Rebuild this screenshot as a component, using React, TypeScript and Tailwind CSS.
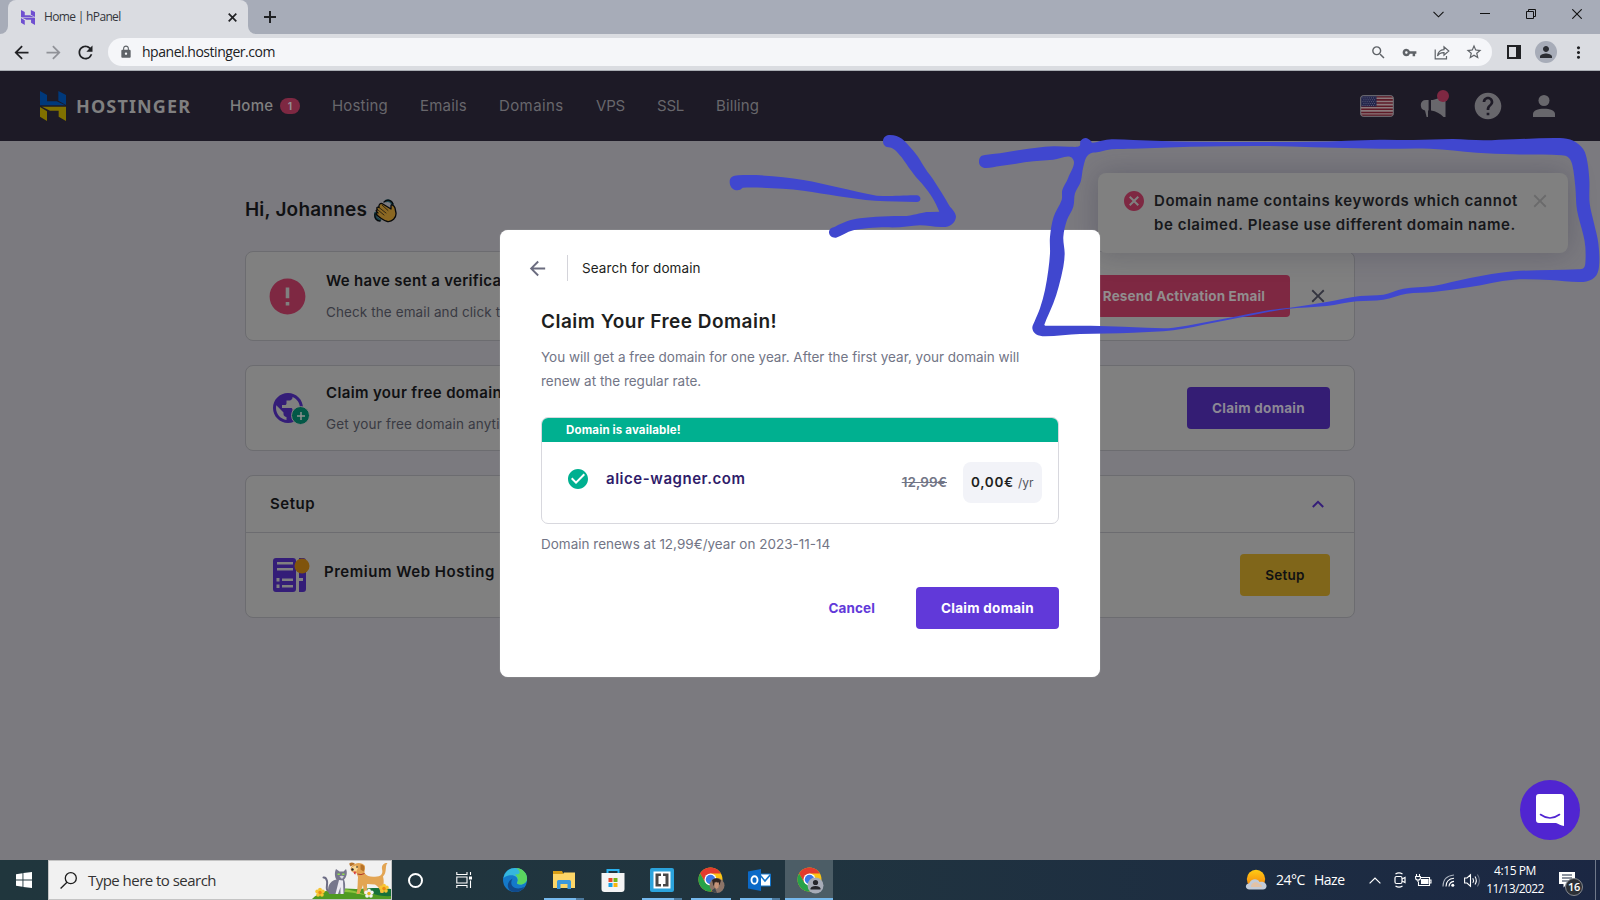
import type { ReactNode } from "react";
import {
  MdArrowBack,
  MdArrowForward,
  MdCancel,
  MdCheckCircle,
  MdClose,
  MdError,
  MdHelp,
  MdLock,
  MdMoreVert,
  MdPerson,
  MdPublic,
  MdRefresh,
  MdSearch,
  MdStarBorder,
  MdVpnKey,
} from "react-icons/md";

type Point = [number, number];

/** Closed smooth outline through the given points. */
function smooth(points: Point[]): string {
  const n = points.length;
  const at = (i: number) => points[(i + n) % n];
  let d = `M${points[0][0]} ${points[0][1]}`;
  for (let i = 0; i < n; i++) {
    const [p0, p1, p2, p3] = [at(i - 1), at(i), at(i + 1), at(i + 2)];
    const reach = Math.hypot(p2[0] - p1[0], p2[1] - p1[1]) / 3;
    const inLen = Math.hypot(p2[0] - p0[0], p2[1] - p0[1]) || 1;
    const outLen = Math.hypot(p3[0] - p1[0], p3[1] - p1[1]) || 1;
    const ax = p1[0] + ((p2[0] - p0[0]) / inLen) * reach;
    const ay = p1[1] + ((p2[1] - p0[1]) / inLen) * reach;
    const bx = p2[0] - ((p3[0] - p1[0]) / outLen) * reach;
    const by = p2[1] - ((p3[1] - p1[1]) / outLen) * reach;
    d += `C${ax} ${ay} ${bx} ${by} ${p2[0]} ${p2[1]}`;
  }
  return d + "Z";
}

const boxOuter: Point[] = [
  [855, 105], [900, 100], [960, 90], [1010, 83], [1060, 79], [1110, 80], [1138, 78], [1142, 62], [1157, 54], [1172, 62], [1177, 68],
  [1205, 62], [1235, 58], [1300, 60], [1470, 65], [1840, 65], [2040, 59], [2140, 60], [2260, 57], [2350, 61], [2440, 58], [2580, 54],
  [2620, 62], [2650, 88], [2662, 125], [2668, 180], [2669, 250], [2682, 310], [2695, 370], [2697, 440], [2684, 472], [2650, 486],
  [2550, 480], [2440, 479], [2310, 501], [2200, 516], [2120, 521], [2050, 539], [1970, 544], [1880, 558], [1760, 567], [1640, 589],
  [1540, 608], [1420, 631], [1300, 638], [1140, 642], [1035, 649], [1008, 643], [997, 625], [1004, 604], [1020, 565], [1035, 510],
  [1045, 450], [1050, 400], [1050, 350], [1061, 290], [1085, 240], [1087, 210], [1104, 175], [1118, 116], [1060, 119], [1000, 124],
  [900, 138], [858, 144], [841, 137], [837, 122], [843, 109],
];

const boxInner: Point[] = [
  [1165, 104], [1200, 95], [1235, 88], [1300, 86], [1470, 80], [1700, 78], [1840, 82], [2040, 86], [2190, 86], [2330, 98], [2440, 103],
  [2585, 106], [2606, 113], [2617, 135], [2626, 200], [2631, 270], [2650, 345], [2656, 380], [2656, 430], [2651, 444], [2636, 448],
  [2440, 454], [2310, 474], [2200, 498], [2110, 506], [2050, 524], [1980, 528], [1880, 546], [1770, 563], [1710, 570], [1580, 595],
  [1420, 623], [1340, 623], [1200, 618], [1036, 617], [1033, 614], [1060, 550], [1076, 500], [1090, 440], [1094, 400], [1090, 350], [1101, 300],
  [1120, 260], [1125, 220], [1142, 185], [1150, 140],
];

function Scribble() {
  return (
    <svg className="pointer-events-none absolute inset-0 z-30" width="1600" height="900" viewBox="0 0 1600 900" fill="#4047cf">
      <g transform="translate(700 120) scale(.33333)">
        <path d="M89 186C89 172 98 167 115 166C180 163 250 170 310 180C380 192 450 212 530 227C570 230 620 226 650 226C665 227 665 245 650 246C610 244 570 245 525 242C450 236 380 222 310 212C250 205 190 202 128 203C120 212 108 213 98 206Q89 199 89 186Z" />
        <path d="M549 64C549 50 560 45 570 45C600 45 612 60 640 92C660 115 670 140 690 165C715 200 735 235 750 260C765 275 768 285 768 290C766 310 750 322 725 321C700 321 680 316 660 316C630 318 600 324 560 322C520 322 490 325 460 331C440 336 425 348 408 353C395 354 387 346 387 337C387 326 395 323 405 320C430 308 450 298 480 295C520 289 570 288 620 288C650 284 670 275 690 276L718 275C705 245 695 225 665 190C640 165 625 140 605 112C590 95 580 82 565 82C555 81 549 74 549 64Z" />
        <path fillRule="evenodd" d={smooth(boxOuter) + smooth(boxInner)} />
      </g>
    </svg>
  );
}

function HMark({ top, bottom, width, height }: { top: string; bottom: string; width: number; height: number }) {
  return (
    <svg width={width} height={height} viewBox="0 0 78 90" preserveAspectRatio="none">
      <path fill={top} d="M0 0L21 12V31H50L76 43H0ZM55 0L78 12V42L55 29Z" />
      <path fill={bottom} d="M0 48L21 61V90L0 77ZM6 47H78V90L56 77V59H30Z" />
    </svg>
  );
}

function BrowserChrome() {
  return (
    <div className="flex h-[71px] flex-col font-['Open_Sans',sans-serif]">
      <div className="flex h-[34px] bg-[#a7acb8]">
        <div className="flex w-2 items-end bg-[#dadce1]">
          <div className="h-full w-2 rounded-br-lg bg-[#a7acb8]" />
        </div>
        <div className="flex w-[240px] items-center rounded-t-lg bg-[#dadce1] pl-[13px] pr-[9px]">
          <HMark top="#6f4fd0" bottom="#6f4fd0" width={14} height={15} />
          <span className="ml-[9px] flex-1 text-[12px] tracking-[-0.66px] text-[#33363b]">Home | hPanel</span>
          <svg className="mr-[2px]" width="9" height="9" viewBox="0 0 9 9" stroke="#202124" strokeWidth="1.7"><path d="M.7 .7L8.300 8.300M8.300 .7L.7 8.300" /></svg>
        </div>
        <div className="flex w-2 bg-[#dadce1]">
          <div className="h-full w-2 rounded-bl-lg bg-[#a7acb8]" />
        </div>
        <div className="flex flex-1 items-center justify-between pl-[8px]">
          <svg width="12" height="12" viewBox="0 0 12 12" stroke="#202124" strokeWidth="2">
            <path d="M6 0V12M0 6H12" />
          </svg>
          <div className="flex items-center pb-[6px] pr-[18px]">
            <svg className="mr-[36px]" width="11" height="7" viewBox="0 0 11 7" fill="none" stroke="#111" strokeWidth="1.1"><path d="M.5 .8L5.5 5.8L10.5 .8" /></svg>
            <svg className="mr-[36px]" width="10" height="2" viewBox="0 0 10 2"><path d="M0 0H10V1H0Z" fill="#111" /></svg>
            <svg className="mr-[36px]" width="10" height="10" viewBox="0 0 10 10" fill="none" stroke="#111"><path d="M.5 2.5H7.5V9.5H.5ZM2.5 2.5V.5H9.5V7.5H7.5" /></svg>
            <svg width="10" height="10" viewBox="0 0 10 10" stroke="#111" strokeWidth="1.1"><path d="M.3 .3L9.7 9.7M9.7 .3L.3 9.7" /></svg>
          </div>
        </div>
      </div>
      <div className="flex h-[37px] items-center border-b border-[#a9adb3] bg-[#dadce1] pl-[11px] text-[#202124]">
        <MdArrowBack className="mr-[11px] size-[21px]" />
        <MdArrowForward className="mr-[11px] size-[21px] text-[#909298]" />
        <MdRefresh className="mr-[12px] size-[21px]" />
        <div className="flex h-7 w-[1384px] items-center rounded-full bg-[#f5f6f9] pl-[11px] pr-[9px] text-[#5f6368]">
          <MdLock className="size-[14px]" />
          <span className="ml-[9px] flex-1 text-[14px] leading-7 tracking-[-0.47px] text-[#202124]">hpanel.hostinger.com</span>
          <MdSearch className="mr-[15px] size-[17px]" />
          <MdVpnKey className="mr-[17px] size-[15px]" />
          <svg className="mr-[15px]" width="16" height="15" viewBox="0 0 16 15" fill="none" stroke="#5f6368" strokeWidth="1.2">
            <path d="M1.2 4.5V13.8H12.5V11M3.5 11C4 7 6 4.8 10 4.6V1.8L14.8 6L10 10.2V7.6C7 7.4 5 8.5 3.5 11Z" />
          </svg>
          <MdStarBorder className="size-[18px]" />
        </div>
        <svg className="ml-[15px]" width="14" height="14" viewBox="0 0 14 14"><path fill="#202124" fillRule="evenodd" d="M0 0H14V14H0ZM2 2V12H9V2Z" /></svg>
        <span className="ml-[14px] flex size-[22px] items-center justify-center rounded-full bg-[#a7acb8]"><MdPerson className="size-[18px] text-[#2b2d33]" /></span>
        <MdMoreVert className="ml-[12px] size-[19px]" />
      </div>
    </div>
  );
}

const links = [
  { label: "Hosting", style: "w-[56px] mr-[32px] tracking-[0.17px]" },
  { label: "Emails", style: "w-[47px] mr-[32px] tracking-[0.2px]" },
  { label: "Domains", style: "w-[65px] mr-[32px] tracking-[0.4px]" },
  { label: "VPS", style: "w-[29px] mr-[32px] tracking-[-0.2px]" },
  { label: "SSL", style: "w-[27px] mr-[32px] tracking-[-0.2px]" },
  { label: "Billing", style: "w-[43px] tracking-[0.1px]" },
];

function Flag() {
  return (
    <svg width="34" height="22" viewBox="0 0 35 23" preserveAspectRatio="none">
      <rect x=".75" y=".75" width="33.5" height="21.5" rx="2" fill="#8b7a7c" />
      {[1, 4.3, 7.6, 10.9, 14.2, 17.5, 20.4].map((y) => (
        <path key={y} d={`M1 ${y}H34V${y + 1.6}H1Z`} fill="#5e1a27" />
      ))}
      <path d="M1 1H17V12H1Z" fill="#23254c" />
      <path d="M2.5 3H16M3.5 5H16M2.5 7H16M3.5 9H16M2.5 11H16" stroke="#66677f" strokeWidth=".9" strokeDasharray="1 1.2" />
      <rect x=".75" y=".75" width="33.5" height="21.5" rx="2.5" fill="none" stroke="#77767b" strokeWidth="1" />
    </svg>
  );
}

function Header() {
  return (
    <header className="flex h-[70px] items-center bg-[#1d1a26] pl-[40px] pr-[45px] text-[15px] text-[#68676c]">
      <HMark top="#00397b" bottom="#807000" width={26} height={30} />
      <span className="ml-[10px] w-[117px] font-['Noto_Sans',sans-serif] text-[18px] font-bold leading-7 tracking-[1.15px] text-[#808080]">HOSTINGER</span>
      <div className="ml-[37px] mr-[32px] flex items-center">
        <span className="w-[44px] font-medium tracking-[0.2px] text-[#808080]">Home</span>
        <span className="ml-[6px] flex h-4 w-5 items-center justify-center rounded-full bg-[#7e2842] text-[10px] font-bold text-[#959095]">1</span>
      </div>
      {links.map((l) => (
        <span key={l.label} className={`whitespace-nowrap ${l.style}`}>{l.label}</span>
      ))}
      <div className="ml-auto flex items-center text-[#68676c]">
        <Flag />
        <div className="relative ml-[26px] size-[28px]">
          <svg width="28" height="28" viewBox="0 0 28 28" fill="#68676c">
            <path d="M8.6 8V18.500H8V25H6.6L5 18.500C2 18 .8 16 .8 13C.8 10 2.6 8 6 8ZM11 8C16 8 20 5.500 22.5 3.500H25.500V25H23.5C20 21.500 16 19 11 18.500Z" />
          </svg>
          <span className="absolute -top-[2px] right-[-1px] size-3 rounded-full bg-[#7e2842]" />
        </div>
        <MdHelp className="ml-[24px] size-[32px]" />
        <svg className="ml-[29px]" width="22" height="22" viewBox="0 0 22 22" fill="#68676c"><circle cx="11" cy="5.5" r="5.5" /><path d="M0 22V19C0 15.5 5 13.7 11 13.7S22 15.5 22 19V22Z" /></svg>
      </div>
    </header>
  );
}

function Wave() {
  return (
    <svg width="23" height="24" viewBox="0 0 23 24" stroke="#08090b" strokeWidth="1.3" strokeLinejoin="round" strokeLinecap="round">
      <path fill="none" stroke="#17434d" strokeWidth="2.6" d="M12 2C15 1 18 2.5 18.5 6M1.5 14C1 18 3 20.5 6 21" />
      <path fill="none" d="M10 3C13 .2 17.5 .6 19 5M1 15C.2 19 2.5 22 6 22" />
      <path fill="#8a6722" d="M8 4.5L17 10V6.5C17 5.5 20 5.5 21 9L22 14C22.5 19 18 23 13.5 22.5C10 22 4 17.5 2.5 15.5C1.5 14 3 13.3 4 14C1.5 12 1.8 10.5 3.5 11C2 8.5 3.5 7.5 5 8.5C4.5 5.5 6.5 4 8 4.5Z" />
      <path fill="none" strokeWidth=".7" d="M4 11L10 16M5 8.5L12 14M8 6L14 11.5" />
    </svg>
  );
}

function Notice({ icon, title, text, children }: { icon: ReactNode; title: ReactNode; text: ReactNode; children: ReactNode }) {
  return (
    <>
      <div className="flex w-[80px] shrink-0 items-center pl-6">{icon}</div>
      <div className="flex flex-1 flex-col whitespace-nowrap pt-px">
        <div className="leading-[31px]">{title}</div>
        <div className="leading-[32px]">{text}</div>
      </div>
      {children}
    </>
  );
}

function Page() {
  return (
    <main className="flex flex-1 flex-col bg-[#7b7a7f] pl-[245px] text-[#101113]">
      <div className="flex h-[110px] items-center pt-[29px]">
        <h1 className="w-[129px] whitespace-nowrap text-[19px] font-semibold tracking-[0.2px]">Hi, Johannes</h1>
        <Wave />
      </div>
      <section className="mb-6 flex h-[90px] w-[1110px] items-center rounded-lg border border-[#6c6c70] bg-[#808080]">
        <Notice
          icon={<MdError className="-ml-[4px] size-[43px] text-[#7e2842]" />}
          title={<h2 className="text-[15px] font-semibold tracking-[0.3px]">We have sent a verifica</h2>}
          text={<p className="text-[13.5px] tracking-[0.1px] text-[#393a43]">Check the email and click t</p>}
        >
          <div className="mr-[17px] flex h-[42px] w-[213px] items-center justify-end rounded-[4px] bg-[#7e2842] pr-[25px] text-[13.5px] font-bold tracking-[0.15px] text-[#918d8e]">Resend Activation Email</div>
          <MdClose className="mr-[25px] size-[22px] text-[#33343f]" />
        </Notice>
      </section>
      <section className="mb-6 flex h-[86px] w-[1110px] items-center rounded-lg border border-[#6c6c70] bg-[#808080]">
        <Notice
          icon={
            <div className="relative size-[36px]">
              <MdPublic className="size-[36px] text-[#341d78]" />
              <span className="absolute right-[-4px] bottom-[1px] flex size-[19px] items-center justify-center rounded-full border-[1.5px] border-[#808080] bg-[#035847]">
                <svg width="8" height="8" viewBox="0 0 8 8" stroke="#909090" strokeWidth="1.5"><path d="M4 0V8M0 4H8" /></svg>
              </span>
            </div>
          }
          title={<h2 className="text-[15px] font-semibold tracking-[0.36px]">Claim your free domain</h2>}
          text={<p className="text-[13.5px] tracking-[0.16px] text-[#393a43]">Get your free domain anytin</p>}
        >
          <div className="mr-6 flex h-[42px] w-[143px] items-center justify-center rounded-[4px] bg-[#341d74] text-[13.5px] font-bold tracking-[0.27px] text-[#8c8895]">Claim domain</div>
        </Notice>
      </section>
      <section className="flex h-[143px] w-[1110px] flex-col rounded-lg border border-[#6c6c70] bg-[#808080]">
        <div className="flex h-[57px] items-center justify-between border-b border-[#6c6c70] pl-6 pr-[30px]">
          <h2 className="text-[15px] font-semibold tracking-[0.55px]">Setup</h2>
          <svg className="mb-px" width="12" height="8" viewBox="0 0 12 8" fill="none" stroke="#341d78" strokeWidth="2"><path d="M.8 7L6 1.8L11.2 7" /></svg>
        </div>
        <div className="flex flex-1 items-center">
          <div className="w-[78px] pl-[27px]">
            <svg width="37" height="34" viewBox="0 0 37 34" fill="#341d78">
              <path fillRule="evenodd" d="M3 0H20Q23 0 23 3V31Q23 34 20 34H3Q0 34 0 31V3Q0 0 3 0ZM4 4V6.5H20V4ZM4 10V12.5H20V10ZM9 20.5V23H20V20.5ZM9 27V29.5H20V27ZM3.5 20V23.5H6.5V20ZM3.5 26.5V30H6.5V26.5Z" />
              <path d="M26 0H30Q33 0 33 3V31Q33 34 30 34H26V23H30V20H26Z" />
              <circle cx="29" cy="8" r="7.5" fill="#80540c" />
            </svg>
          </div>
          <span className="flex-1 pb-[6px] text-[15px] font-semibold tracking-[0.52px]">Premium Web Hosting</span>
          <div className="mr-6 flex h-[42px] w-[90px] items-center justify-center rounded-[4px] bg-[#80661a] text-[13.5px] font-semibold tracking-[0.3px]">Setup</div>
        </div>
      </section>
    </main>
  );
}

function Toast() {
  return (
    <div className="absolute top-[173px] left-[1098px] z-10 flex h-[80px] w-[470px] rounded-lg bg-[#808080] pt-4 pl-6 shadow-[0_0_28px_rgba(40,38,60,0.28)]">
      <MdCancel className="size-6 text-[#7e2842]" />
      <p className="ml-2 mr-[10px] w-[367px] whitespace-nowrap text-[15px] font-semibold leading-6 text-[#17181b]">
        <span className="block tracking-[0.55px]">Domain name contains keywords which cannot</span>
        <span className="block tracking-[0.54px]">be claimed. Please use different domain name.</span>
      </p>
      <MdClose className="-ml-[2px] mt-[1px] size-[22px] text-[#6a6a6b]" />
    </div>
  );
}

function Modal() {
  return (
    <div className="absolute top-[230px] left-[500px] z-20 flex h-[447px] w-[600px] flex-col rounded-lg bg-white px-[41px] pt-[25px] text-[#1d1e20] shadow-[0_0_1px_#d0d0d4]">
      <div className="-ml-[15px] flex h-[26px] items-center">
        <MdArrowBack className="size-[23px] text-[#6b6c7f]" />
        <div className="ml-[18px] mr-[14px] h-[26px] w-px bg-[#d4d4da]" />
        <span className="text-[13.5px] tracking-[0.08px]">Search for domain</span>
      </div>
      <h2 className="mt-[27px] text-[19px] font-semibold leading-7 tracking-[0.48px]">Claim Your Free Domain!</h2>
      <p className="mt-[9px] whitespace-nowrap text-[13.5px] leading-6 tracking-[-0.01px] text-[#727586]">
        You will get a free domain for one year. After the first year, your domain will
        <br />
        renew at the regular rate.
      </p>
      <div className="mt-6 flex h-[107px] flex-col overflow-hidden rounded-[7px] border border-[#d8d8de]">
        <div className="flex h-6 shrink-0 items-center bg-[#00b090] pt-px pl-6 text-[11.5px] font-bold tracking-[0.15px] text-white">Domain is available!</div>
        <div className="flex flex-1 items-start pl-6 pr-4">
          <MdCheckCircle className="mt-[25px] size-6 text-[#00b090]" />
          <span className="ml-4 mt-[25px] flex-1 text-[15px] font-semibold leading-6 tracking-[0.54px] text-[#2f1c6a]">alice-wagner.com</span>
          <span className="mt-[28px] mr-4 text-[13.5px] font-semibold leading-6 tracking-[0.1px] text-[#727586] line-through">12,99€</span>
          <span className="mt-5 flex h-[41px] w-[79px] items-center rounded-lg bg-[#f2f3f8] pl-2">
            <b className="w-[47px] text-[13.5px] font-semibold tracking-[0.7px]">0,00€</b>
            <span className="pt-px text-[12px] text-[#55565f]">/yr</span>
          </span>
        </div>
      </div>
      <p className="mt-2 text-[13.5px] leading-6 text-[#727586]">Domain renews at 12,99€/year on 2023-11-14</p>
      <div className="mt-[31px] flex items-center justify-end text-[13.5px] font-bold">
        <span className="mr-[41px] text-[#6139d9] tracking-[0.1px]">Cancel</span>
        <span className="flex h-[42px] w-[143px] items-center justify-center rounded-[4px] bg-[#6139d9] tracking-[0.27px] text-white">Claim domain</span>
      </div>
    </div>
  );
}

function Chat() {
  return (
    <div className="absolute top-[780px] left-[1520px] z-10 flex size-[60px] items-center justify-center rounded-full bg-[#5025d1]">
      <svg width="28" height="32" viewBox="0 0 28 32">
        <path fill="#fff" d="M3 0H25Q28 0 28 3V32C25 31.5 22.5 30 20 29H3Q0 29 0 26V3Q0 0 3 0Z" />
        <path fill="none" stroke="#5025d1" strokeWidth="1.6" strokeLinecap="round" d="M4.5 20.5Q14 27.5 23.5 20.5" />
      </svg>
    </div>
  );
}

function Pets() {
  return (
    <svg width="79" height="37" viewBox="0 0 79 37">
      <path fill="#4f9a22" d="M0 37C8 28 26 25 44 27C58 26 70 26 80 27V37Z" />
      <path fill="#8cc43c" d="M14 30C28 24 42 28 56 34C44 30 28 29 14 30Z" />
      <path fill="#16703a" d="M52 28C62 24 72 27 80 27V34C70 35 60 32 52 28Z" />
      <g fill="#77778d">
        <path fill="none" stroke="#6c6c84" strokeWidth="2" strokeLinecap="round" d="M19 30C12 29 16 23 15 19Q14 15 11.500 15.500" />
        <path d="M24 7L27.500 9.500H31.500L34 7C35.500 10 35 15 32 17.500C34 22 33 29 32 32H17C14.500 26 17 19 24.500 17.500C22.500 15 22.500 10 24 7Z" />
        <path fill="#eceaf2" d="M27 18L31 18.500L31.500 32H28.500V25L26 32H23.500Z" />
        <path fill="#d6d5df" d="M27.500 14.500Q30 13 32 14.500L30 17Z" />
        <path d="M25.500 12.200H27.800M30.200 12.200H32.500" stroke="#8fe04d" strokeWidth="1.600" />
      </g>
      <g fill="#e3a553">
        <path d="M43 2C46 0 51 1 53 4L52.500 11C55 15 60 15 65 14.500C70 14 71 11 70 7C69.500 3 72 .5 75.500 1C72.500 4 75.500 10 71 14.500C72.500 20 71 23 71.500 31H68.500C68 27 66 24 63 22.500L55 22V32H52L51 23L47.500 32H44.500C46 26 45.500 20 46 15L44.500 11Q39 11 38.500 7Q39 4 43 2Z" />
        <path fill="#f9d693" d="M40 5L44 3.500L46 6L44 10L40.500 9.500Z" />
        <path fill="#b7732a" d="M48.500 2.500C52.500 2 53.500 7 51.500 9.500L48.500 7.500ZM42 1L43 2L38.500 4.500Q37 2.500 37.500 1Q40 0 42 1Z" />
        <path d="M41.500 9.500H44L43.500 12.500Q41.500 12 41.500 9.500Z" fill="#d84343" />
        <path fill="none" stroke="#b13a28" strokeWidth="1" d="M45.500 12Q49 13.500 52.500 11.500" />
        <circle cx="40.500" cy="7.500" r="1.200" fill="#222" />
        <circle cx="45" cy="5" r=".8" fill="#222" />
      </g>
      {[[8, 30.5, "#f7c531", "#ee8b12"], [57, 31.5, "#f4f4f4", "#f0b522"], [72, 26.5, "#f7c531", "#ee8b12"]].map(([x, y, petal, core]) => (
        <g key={x} fill={petal as string} transform={`translate(${x} ${y})`}>
          <circle cx="-2.800" cy="-1" r="1.900" /><circle cx="2.800" cy="-1" r="1.900" /><circle cx="0" cy="-2.800" r="1.900" /><circle cx="-1.900" cy="2.300" r="1.900" /><circle cx="1.900" cy="2.300" r="1.900" />
          <circle r="1.7" fill={core as string} />
        </g>
      ))}
    </svg>
  );
}

function Chrome({ children }: { children: ReactNode }) {
  return (
    <svg width="27" height="27" viewBox="0 0 27 27">
      <circle cx="12.5" cy="12.5" r="12" fill="#fbc416" />
      <path fill="#e33b2e" d="M2.1 6.5A12 12 0 0 1 22.9 6.5H12.5L7.3 15.5Z" />
      <path fill="#27a249" d="M2.1 6.5L7.3 15.5L12.5 18.5H17.7L12.5 24.5A12 12 0 0 1 2.1 6.5Z" />
      <circle cx="12.5" cy="12.5" r="6" fill="#fff" />
      <circle cx="12.5" cy="12.5" r="4.7" fill="#3b78e7" />
      {children}
    </svg>
  );
}

function TaskCell({ line, active, children }: { line?: "full" | "split"; active?: boolean; children: ReactNode }) {
  return (
    <div className={`flex h-10 flex-col items-center ${active ? "ml-px w-12 bg-[#4c5d66]" : "w-[49px]"}`}>
      <div className="flex h-[38px] items-center pt-[2px]">{children}</div>
      {line && (
        <div className={`flex h-[2px] ${active ? "w-12" : "w-10"}`}>
          <div className="flex-1 bg-[#76b9ed]" />
          {line === "split" && <div className="w-2 bg-[#4d7b9f]" />}
        </div>
      )}
    </div>
  );
}

function Taskbar() {
  return (
    <footer className="flex h-10 bg-gradient-to-r from-[#20363d] via-[#20343f] to-[#1b2743] font-['Open_Sans',sans-serif] text-white">
      <div className="flex w-12 items-center justify-center">
        <svg width="16" height="16" viewBox="0 0 16 16" fill="#fff"><path d="M0 2.2L6.5 1.3V7.5H0ZM7.4 1.1L16 0V7.5H7.4ZM0 8.5H6.5V14.7L0 13.8ZM7.4 8.5H16V16L7.4 14.9Z" /></svg>
      </div>
      <div className="flex w-[344px] items-center border border-[#c4c4c4] bg-[#f1f1f1] pl-[11px]">
        <svg width="17" height="17" viewBox="0 0 17 17" fill="none" stroke="#1c1c1c" strokeWidth="1.3"><circle cx="10.8" cy="6.2" r="5.5" /><path d="M7 10.2L.6 16.5" /></svg>
        <span className="ml-[11px] flex-1 text-[15px] tracking-[-0.53px] text-[#333]">Type here to search</span>
        <Pets />
      </div>
      <div className="flex w-12 items-center justify-center">
        <span className="mr-px size-[15px] rounded-full border-2 border-white" />
      </div>
      <div className="flex w-[50px] items-center justify-center pr-[2px]">
        <svg width="17" height="16" viewBox="0 0 17 16" fill="none" stroke="#fff" strokeWidth="1.1"><path d="M.8 0V2.5H11V0M.8 16V13.5H11V16M.8 5H11V11H.8ZM14.5 0V3M14.5 8.5V16" /><path fill="#fff" stroke="none" d="M13 4.5H16V7.5H13Z" /></svg>
      </div>
      <TaskCell>
        <svg width="24" height="24" viewBox="0 0 24 24">
          <circle cx="12" cy="12" r="12" fill="#1479c9" />
          <path fill="#35b7dd" d="M.5 10C2 3 7 0 12 0C19 0 24 5 24 10.5C24 14 21 16.5 17.5 16.5C15 16.5 13.5 15.5 14.2 14.5C17 10 10 3.5 .5 10Z" />
          <path fill="#5bd65f" d="M13 0C20 .5 24 5 24 10.5C24 14 21 16.5 17.5 16.5C15 16.5 13.5 15.5 14.2 14.5C16 11 14 8 12 6.5C18 7 18 3 13 0Z" />
          <path fill="#114a8b" d="M8.5 13C7 19 13 22.5 21.5 19C18 24 12 25 8 23C3 20 4 13 10 10.5C9.2 11 8.7 12 8.5 13Z" />
        </svg>
      </TaskCell>
      <TaskCell line="split">
        <svg width="22" height="18" viewBox="0 0 22 18"><path fill="#d99f16" d="M0 0H9L10 2V6H0Z" /><path fill="#fdd667" d="M0 3H10L11 1.5H22V17H0Z" /><path fill="#3b98dc" d="M4 18V10.5Q4 9 5.5 9H16.500Q18 9 18 10.5V18H14.500V13H7.500V18Z" /></svg>
      </TaskCell>
      <TaskCell>
        <svg width="24" height="24" viewBox="0 0 24 24"><path fill="none" stroke="#29b1ee" strokeWidth="2" d="M6.500 6V2H17.500V6" /><path fill="#f4f4f4" d="M.5 5H23.500V21Q23.500 24 20.500 24H3.500Q.5 24 .5 21Z" /><path fill="#e8482a" d="M7.500 10H11.500V14H7.500Z" /><path fill="#74b519" d="M12.500 10H16.500V14H12.500Z" /><path fill="#17a2e8" d="M7.500 15H11.500V19H7.500Z" /><path fill="#f9b60c" d="M12.500 15H16.500V19H12.500Z" /></svg>
      </TaskCell>
      <TaskCell line="split">
        <svg width="24" height="24" viewBox="0 0 24 24"><rect width="24" height="24" rx="2" fill="#2ba3dc" /><path fill="#fff" d="M3.500 3.500H20.500V20.500H3.500Z" /><path fill="#474747" d="M5.500 5.500H11V8H8.500V16H11V18.500H5.500ZM18.500 5.500H13V8H15.500V16H13V18.500H18.500Z" /></svg>
      </TaskCell>
      <TaskCell line="full">
        <div className="translate-x-px">
          <Chrome>
            <circle cx="19" cy="18.500" r="7.500" fill="#8b7468" />
            <path fill="#302421" d="M14 13Q19 9.500 23 13.500L21.500 18L18 14.500L15.500 19Z" />
            <path fill="#c89478" d="M16.500 15.500H21L20.500 20.500L18.500 22L16.500 20Z" />
            <path fill="#42464c" d="M13.500 23.500L17 21L19 26Q15.500 26 13.500 23.500Z" />
          </Chrome>
        </div>
      </TaskCell>
      <TaskCell line="split">
        <svg width="23" height="22" viewBox="0 0 23 22"><path fill="#fff" stroke="#1576cb" d="M12 5H22.500V17H12Z" /><path fill="none" stroke="#1576cb" strokeWidth="1.6" d="M12 6L17 12L22.500 5.500" /><path fill="#0b69c7" d="M0 2.500L13 0V22L0 19.500Z" /><ellipse cx="6.500" cy="11" rx="3" ry="3.800" fill="none" stroke="#fff" strokeWidth="1.900" /></svg>
      </TaskCell>
      <TaskCell line="full" active>
        <div className="translate-x-px">
          <Chrome>
            <circle cx="18.500" cy="18.500" r="8" fill="#a7acb8" />
            <circle cx="18.500" cy="15.500" r="2.600" fill="#25272d" />
            <path fill="#25272d" d="M13.500 22.500V21.500Q14 19 18.500 19T23.500 21.500V22.500Z" />
          </Chrome>
        </div>
      </TaskCell>
      <div className="ml-auto flex items-center">
        <svg width="22" height="22" viewBox="0 0 22 22"><defs><linearGradient id="sun" x2="0" y2="1"><stop stopColor="#ffcc14" /><stop offset="1" stopColor="#f57a0a" /></linearGradient></defs><circle cx="11" cy="10" r="9.200" fill="url(#sun)" /><path fill="#c3cbd8" d="M4.500 20.500C0 20.500 -.5 15 4 14.500C6 9 13 9 14.500 13C19 11.500 22 15 21.500 17.500Q21 20.500 18 20.500Z" /><path fill="#e3c2a6" d="M6 18C6 13 12 12 14 15Q17 15 17 18Z" /></svg>
        <span className="ml-[9px] w-[38px] text-[14px] leading-5 tracking-[-0.46px]">24°C</span>
        <span className="w-[30px] text-[14px] leading-5 tracking-[-0.5px]">Haze</span>
        <svg className="ml-[25px]" width="12" height="7" viewBox="0 0 12 7" fill="none" stroke="#fff" strokeWidth="1.200"><path d="M.6 6.400L6 1L11.400 6.400" /></svg>
        <svg className="ml-[13px]" width="12" height="16" viewBox="0 0 12 16" fill="none" stroke="#fff" strokeWidth="1.200"><rect x="1" y="4.500" width="7" height="7" rx="1.500" /><path d="M8 7L11 5.500V10.500L8 9M1.500 2Q5 -.3 8.500 2M1.500 14Q5 16.300 8.500 14" /></svg>
        <svg className="ml-[9px]" width="17" height="13" viewBox="0 0 17 13" fill="none" stroke="#fff" strokeWidth="1.100"><path d="M5 3.500H14.500V11.500H3.500V8M14.500 6H16V9H14.500M1.500 0V2.500M4.500 0V2.500M.6 2.500H5.400V4Q5.400 6 3 6T.6 4ZM3 6V8" /><path fill="#fff" d="M6.500 5.500H13V9.500H6.500Z" /></svg>
        <svg className="ml-[10px]" width="13" height="13" viewBox="0 0 13 13" fill="none" stroke="#fff" strokeWidth="1.100"><path d="M1 12.500Q1 2 12 1" stroke="#a9b1bd" /><path d="M4 12.500Q4 5 12 4.200M7 12.500Q7.200 8 12 7.400" /><circle cx="10.800" cy="11.300" r="1.500" fill="#fff" stroke="none" /></svg>
        <svg className="ml-[9px]" width="17" height="15" viewBox="0 0 17 15" fill="none" stroke="#fff" strokeWidth="1.100"><path d="M.6 5H3L6.500 1.800V13.200L3 10H.6ZM8.800 5.200Q10.200 7.500 8.800 9.800" /><path d="M11 3.500Q13.600 7.500 11 11.500" /><path stroke="#6c7587" d="M13.400 1.500Q17.400 7.500 13.400 13.500" /></svg>
        <div className="ml-[4px] mr-px flex w-[60px] flex-col items-center text-[12px] leading-[18px]">
          <span className="tracking-[-0.41px]">4:15 PM</span>
          <span className="tracking-[-0.62px]">11/13/2022</span>
        </div>
        <div className="relative ml-[13px] h-6 w-[36px]">
          <svg className="mt-[4px]" width="16" height="16" viewBox="0 0 16 16"><path fill="#fff" d="M0 0H16V12H8L4.500 15.500V12H0Z" /><path stroke="#1b2840" strokeWidth="1.100" d="M3 3H13M3 6H13M3 9H10" /></svg>
          <span className="absolute top-[10px] left-[6px] flex size-[18px] items-center justify-center rounded-full border border-[#86898f] bg-[#2c3036] text-[11px] font-semibold tracking-[-0.4px]">16</span>
        </div>
        <span className="mr-1 h-10 w-px bg-[#6f788a]" />
      </div>
    </footer>
  );
}

export default function App() {
  return (
    <div className="relative flex h-[900px] w-[1600px] flex-col overflow-hidden font-['Inter',sans-serif]">
      <BrowserChrome />
      <Header />
      <Page />
      <Taskbar />
      <Toast />
      <Modal />
      <Chat />
      <Scribble />
    </div>
  );
}
